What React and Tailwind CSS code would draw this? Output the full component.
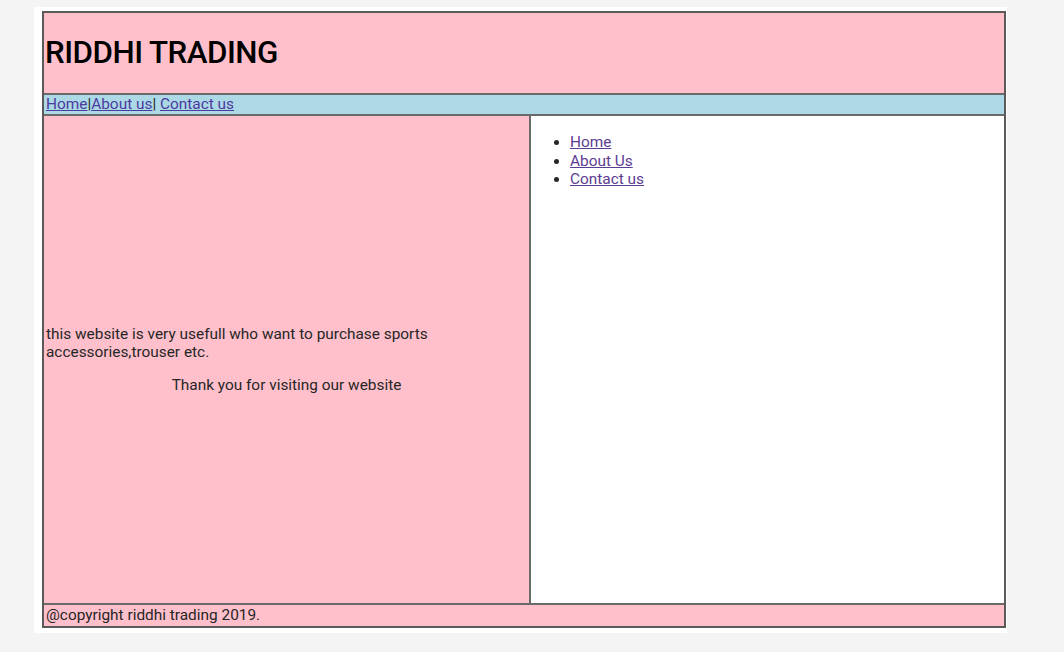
export default function App() {
  const font = { fontFamily: "Roboto, 'Noto Sans', sans-serif" };
  return (
    <div className="w-[1064px] h-[652px] bg-[#f4f4f4] pt-[7px] pl-[34px]" style={font}>
      <div className="w-[973px] h-[626px] bg-white pt-[4px] pl-[8px]">
        <div className="w-[964px] h-[617px] flex flex-col border-2 border-[#5a5a5a] text-[#262626]">
          <div className="h-[82px] bg-[#ffc0cb] flex items-center px-[1px] border-b-2 border-[#6a6a6a]">
            <h1 className="text-[31.3px] font-medium text-black tracking-[-0.5px]">RIDDHI TRADING</h1>
          </div>
          <div className="h-[21px] bg-[#add8e6] flex items-center px-[2px] text-[15.4px] border-b-2 border-[#6a6a6a]">
            <a href="#" className="underline text-[#4b3b9e]">Home</a>
            <span>|</span>
            <a href="#" className="underline text-[#4b3b9e]">About us</a>
            <span>|&nbsp;</span>
            <a href="#" className="underline text-[#4b3b9e]">Contact us</a>
          </div>
          <div className="flex-1 flex border-b-2 border-[#6a6a6a]">
            <div className="w-[487px] bg-[#ffc0cb] flex flex-col justify-center px-[2px] text-[15.4px] leading-[18px] border-r-2 border-[#6a6a6a]">
              <p className="pr-[40px]">this website is very usefull who want to purchase sports accessories,trouser etc.</p>
              <p className="text-center mt-[15px]">Thank you for visiting our website</p>
            </div>
            <div className="flex-1 bg-white pt-[17px]">
              <ul className="list-disc pl-[39px] text-[15.4px] leading-[18.5px]">
                <li><a href="#" className="underline text-[#5d3d92]">Home</a></li>
                <li><a href="#" className="underline text-[#5d3d92]">About Us</a></li>
                <li><a href="#" className="underline text-[#5d3d92]">Contact us</a></li>
              </ul>
            </div>
          </div>
          <div className="h-[21px] bg-[#ffc0cb] flex items-center px-[2px] text-[15.4px]">
            @copyright riddhi trading 2019.
          </div>
        </div>
      </div>
    </div>
  );
}
